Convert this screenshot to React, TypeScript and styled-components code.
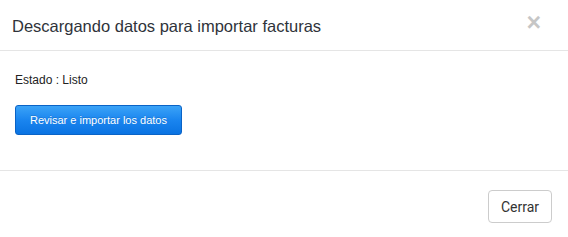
import React from "react";
import styled, { createGlobalStyle } from "styled-components";

const Global = createGlobalStyle`
  html, body { margin: 0; padding: 0; background: #fff; }
  body { font-family: "Liberation Sans", Arial, sans-serif; color: #333; }
`;

const Modal = styled.div`
  width: 568px;
  height: 237px;
  background: #fff;
  display: flex;
  flex-direction: column;
`;

const Header = styled.div`
  height: 51px;
  box-sizing: border-box;
  padding: 0 27px 0 12px;
  display: flex;
  align-items: center;
  justify-content: space-between;
  border-bottom: 1px solid #e5e5e5;
`;

const Title = styled.h4`
  margin: 0;
  font-size: 16.5px;
  font-weight: normal;
  color: #2f333a;
  line-height: 20px;
  padding-top: 1px;
`;

const Close = styled.button`
  border: 0;
  background: none;
  padding: 0;
  font-family: "Liberation Sans", Arial, sans-serif;
  font-size: 25px;
  font-weight: bold;
  line-height: 1;
  color: #000;
  opacity: 0.22;
  cursor: pointer;
  margin-top: -6px;
`;

const Body = styled.div`
  height: 120px;
  box-sizing: border-box;
  padding: 21px 15px 0;
  border-bottom: 1px solid #e5e5e5;
`;

const Status = styled.p`
  margin: 0 0 16px;
  font-size: 12px;
  line-height: 17px;
  color: #222;
`;

const PrimaryButton = styled.button`
  height: 30px;
  box-sizing: border-box;
  padding: 0 14px;
  font-family: "Liberation Sans", Arial, sans-serif;
  font-size: 11px;
  color: #fff;
  border: 1px solid #0a63c6;
  border-radius: 3px;
  background: linear-gradient(to bottom, #3ba3f7 0%, #1a85ef 50%, #0a73e2 100%);
  text-shadow: 0 -1px 0 rgba(0, 0, 0, 0.15);
  cursor: pointer;
`;

const Footer = styled.div`
  flex: 1;
  display: flex;
  justify-content: flex-end;
  align-items: flex-start;
  padding: 19px 16px 0;
`;

const DefaultButton = styled.button`
  height: 33px;
  box-sizing: border-box;
  padding: 0 12px;
  font-family: Roboto, "Open Sans", sans-serif;
  font-size: 14px;
  color: #333;
  background: #fff;
  border: 1px solid #ccc;
  border-radius: 4px;
  cursor: pointer;
`;

export default function App() {
  return (
    <>
      <Global />
      <Modal>
        <Header>
          <Title>Descargando datos para importar facturas</Title>
          <Close aria-label="Cerrar">×</Close>
        </Header>
        <Body>
          <Status>Estado : Listo</Status>
          <PrimaryButton>Revisar e importar los datos</PrimaryButton>
        </Body>
        <Footer>
          <DefaultButton>Cerrar</DefaultButton>
        </Footer>
      </Modal>
    </>
  );
}
